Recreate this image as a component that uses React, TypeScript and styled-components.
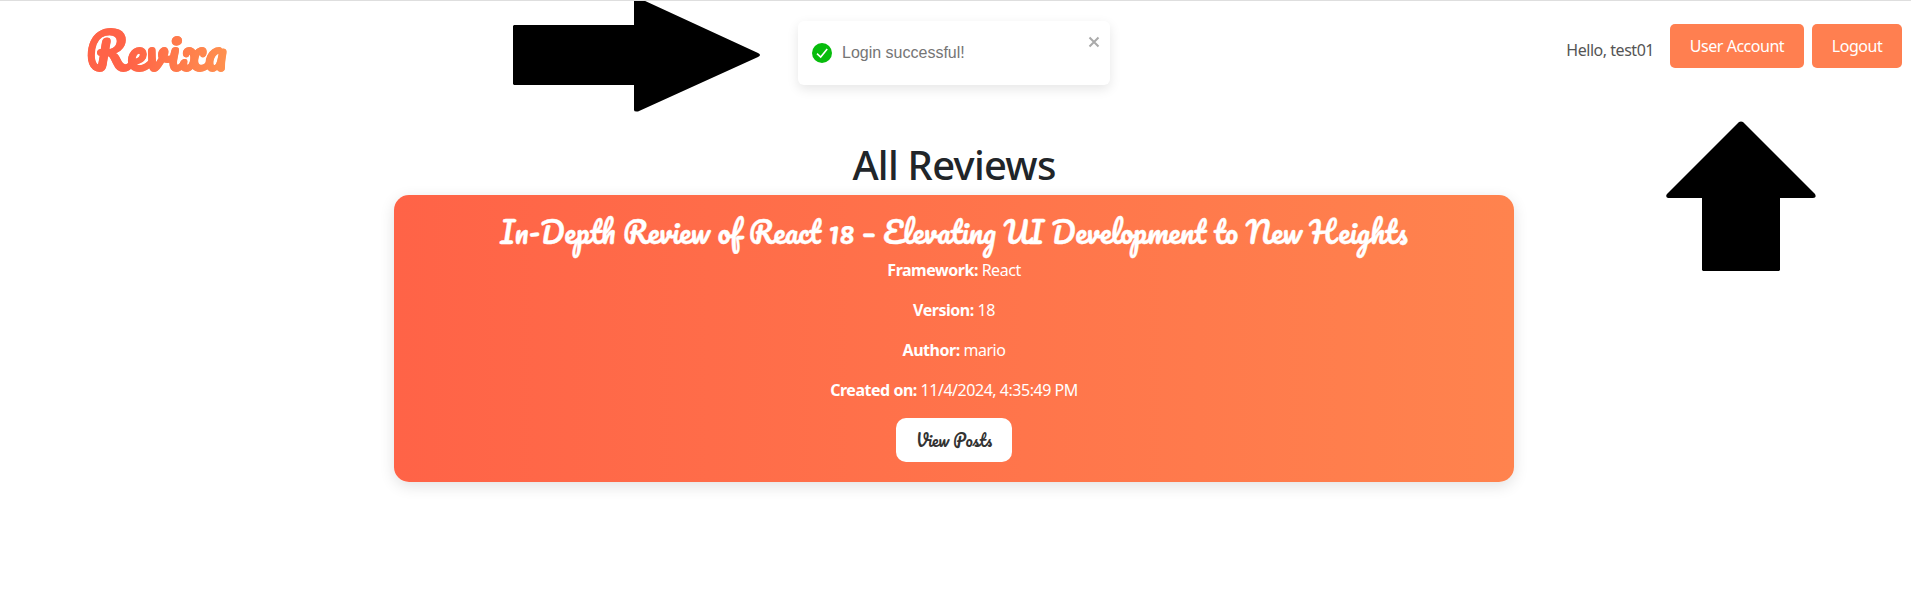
import React from 'react';
import styled, { createGlobalStyle } from 'styled-components';

const GlobalStyle = createGlobalStyle`
  *, *::before, *::after { box-sizing: border-box; }
  body {
    margin: 0;
    background: #fff;
    color: #212529;
    font: 400 16px/24px "Noto Sans", "Open Sans", sans-serif;
    letter-spacing: -0.47px;
    overflow: hidden;
  }
`;

const script = 'Pacifico, "Liberation Serif", serif';

const Page = styled.div`
  position: relative;
  height: 596px;
  overflow: hidden;
  border-top: 1px solid #dedede;
`;

const Header = styled.header`
  display: flex;
  align-items: flex-start;
  justify-content: space-between;
  height: 140px;
  padding: 0 9px 0 86px;
`;

const Logo = styled.div`
  margin-top: 14px;
  font: 700 48px/72px ${script};
  letter-spacing: 0;
  color: transparent;
  background: linear-gradient(90deg, #ff6347 30%, #ff914f);
  background-clip: text;
  -webkit-background-clip: text;
  -webkit-text-stroke: 0.4px transparent;
`;

const UserNav = styled.nav`
  display: flex;
  gap: 8px;
  padding-top: 23px;
`;

const Greeting = styled.span`
  margin: 14px 8px 0 0;
  color: #555;
  line-height: 24px;
`;

const NavButton = styled.button<{ $width: number }>`
  width: ${(p) => p.$width}px;
  height: 44px;
  padding: 0;
  border: 0;
  border-radius: 5px;
  background: #ff7f50;
  color: #fff;
  font: inherit;
  letter-spacing: inherit;
`;

const Reviews = styled.main`
  display: flex;
  flex-direction: column;
  align-items: center;
  padding-right: 3px;
`;

const Heading = styled.h1`
  margin: 0 0 6px;
  font-size: 40px;
  font-weight: 500;
  line-height: 48px;
  letter-spacing: -0.75px;
`;

const Card = styled.article`
  display: flex;
  flex-direction: column;
  align-items: center;
  width: 1120px;
  height: 287px;
  padding: 20px;
  border-radius: 15px;
  background: linear-gradient(90deg, #ff6347, #ff834e);
  box-shadow: 0 4px 15px rgba(0, 0, 0, 0.12);
  color: #fff;
`;

const Title = styled.h2`
  margin: 0 0 10px;
  font: 500 28.8px/33px ${script};
  letter-spacing: 0;
  white-space: nowrap;
  -webkit-text-stroke: 0.4px #fff;
`;

const Detail = styled.p`
  margin: 0 0 16px;
  line-height: 24px;
`;

const PostsButton = styled.button`
  width: 116px;
  height: 44px;
  padding: 0;
  border: 0;
  border-radius: 10px;
  background: #fff;
  color: #333;
  font: 400 16px/24px ${script};
`;

const Toast = styled.div`
  position: absolute;
  top: 20px;
  left: 798px;
  display: flex;
  align-items: center;
  gap: 10px;
  width: 312px;
  height: 64px;
  padding: 0 14px;
  border-radius: 6px;
  background: #fff;
  box-shadow: 0 4px 12px rgba(0, 0, 0, 0.1);
  color: #757575;
  font: 16px/24px "Liberation Sans", sans-serif;
  letter-spacing: 0;
`;

const CloseIcon = styled.svg`
  align-self: flex-start;
  margin: 15px -4px 0 auto;
`;

const Arrow = styled.svg<{ $left: number; $top: number }>`
  position: absolute;
  left: ${(p) => p.$left}px;
  top: ${(p) => p.$top}px;
`;

const details = [
  ['Framework:', 'React'],
  ['Version:', '18'],
  ['Author:', 'mario'],
  ['Created on:', '11/4/2024, 4:35:49 PM'],
];

export default function App() {
  return (
    <Page>
      <GlobalStyle />
      <Header>
        <Logo>Revixa</Logo>
        <UserNav>
          <Greeting>Hello, test01</Greeting>
          <NavButton $width={134}>User Account</NavButton>
          <NavButton $width={90}>Logout</NavButton>
        </UserNav>
      </Header>
      <Reviews>
        <Heading>All Reviews</Heading>
        <Card>
          <Title>In-Depth Review of React 18 – Elevating UI Development to New Heights</Title>
          {details.map(([label, value]) => (
            <Detail key={label}>
              <strong>{label}</strong> {value}
            </Detail>
          ))}
          <PostsButton>View Posts</PostsButton>
        </Card>
      </Reviews>
      <Toast role="status">
        <svg width="20" height="20" viewBox="0 0 20 20">
          <circle cx="10" cy="10" r="10" fill="#07bc0c" />
          <path d="M5 10.6 8.7 14 15.2 6" fill="none" stroke="#fff" strokeWidth="1.6" />
        </svg>
        Login successful!
        <CloseIcon width="12" height="12" viewBox="0 0 12 12">
          <path d="M1.5 1.5 10.5 10.5M10.5 1.5 1.5 10.5" stroke="#aaa" strokeWidth="2" />
        </CloseIcon>
      </Toast>
      <Arrow $left={513} $top={-1} width="248" height="113" viewBox="0 0 248 113">
        <path d="M1 25H121V0H130L245 53Q249 55 245 57L125 111.5Q121 112 121 110V85H1L0 84V26Z" />
      </Arrow>
      <Arrow $left={1666} $top={120} width="150" height="150" viewBox="0 0 150 150">
        <path d="M73 1Q75 0 77 1L149 73Q151 77 147 77H114V149L113 150H37L36 149V77H2Q-1 76 1 73Z" />
      </Arrow>
    </Page>
  );
}
